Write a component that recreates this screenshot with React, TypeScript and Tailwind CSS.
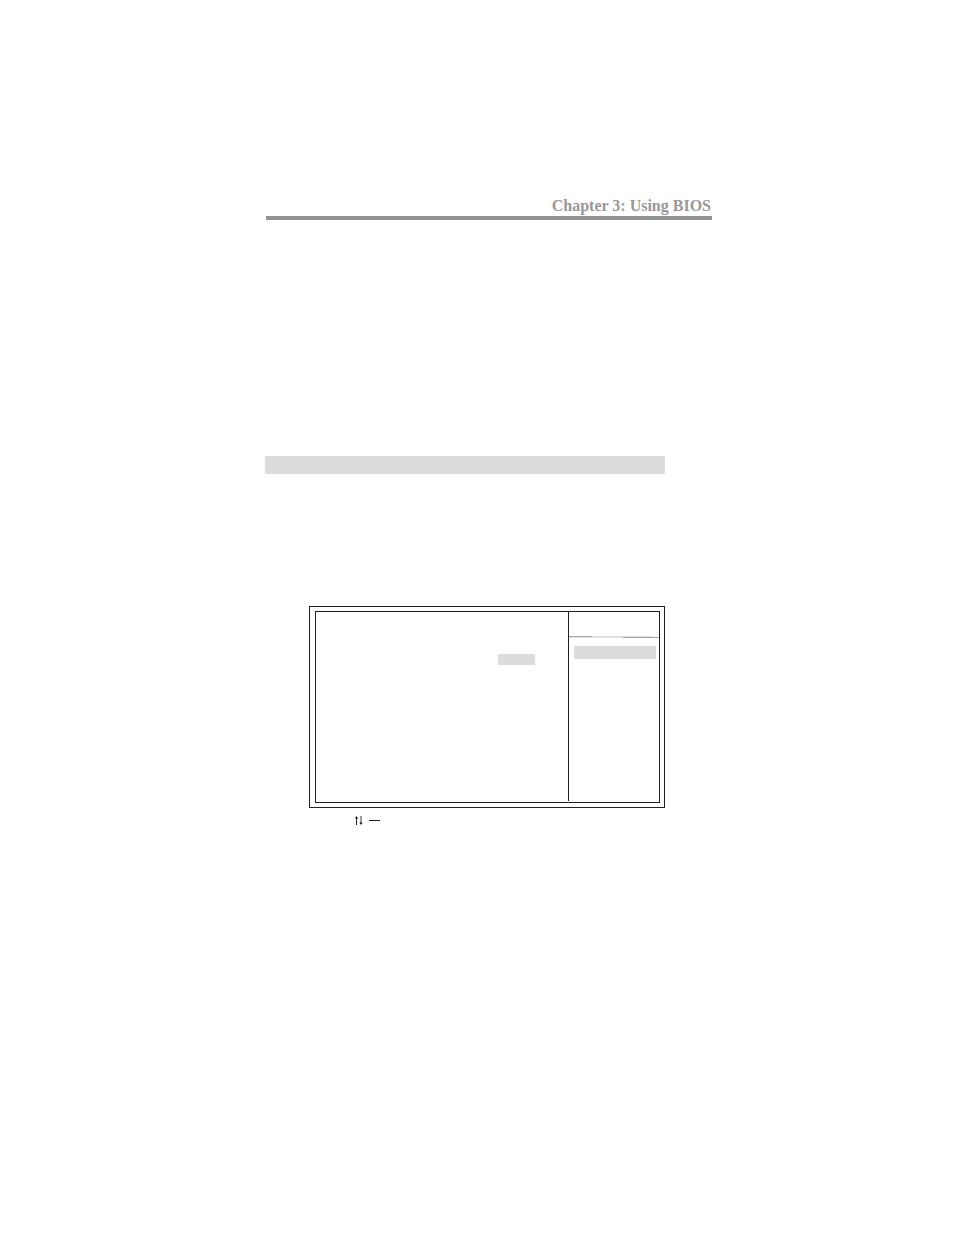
export default function App() {
  return (
    <main className="min-h-screen bg-white pt-[196px] pr-[242px] pl-[265px] text-[#231f20]">
      <header className="ml-px border-b-4 border-[#929195]">
        <h1 className="pr-px text-right font-['Liberation_Serif',serif] text-base leading-5 font-bold text-[#98979b]">
          Chapter 3: Using BIOS
        </h1>
      </header>

      <div className="mr-[47px]">
        <div className="mt-[236px] h-[18px] bg-[#dbdcde]" />

        <section className="mt-[132px] ml-11 border border-[#231f20] py-1 pr-1 pl-[5px]" aria-label="BIOS setup screen">
          <div className="flex h-48 border border-[#231f20]">
            <div className="flex grow justify-end pt-[42px] pr-[33px]">
              <div className="h-[11px] w-[37px] bg-[#dbdcde]" />
            </div>
            <aside className="mb-px w-[91px] border-l border-[#231f20]">
              <svg className="mt-6 block h-[2px] w-full" viewBox="0 0 90 2" preserveAspectRatio="none" shapeRendering="crispEdges" aria-hidden="true">
                <path d="M0 0H84V1H0Z M0 1H54V2H0Z" fill="#e1e1e1" />
                <path d="M0 0H23V1H0Z M54 1H90V2H54Z" fill="#a8a8a8" />
              </svg>
              <div className="mt-2 mr-[3px] ml-[5px] h-[13px] bg-[#dbdcde]" />
            </aside>
          </div>
        </section>

        <div className="mt-2 ml-[89px] flex h-[9px] items-center">
          <svg className="h-[9px] w-[26px]" viewBox="0 0 26 9" fill="none" stroke="#231f20" role="img" aria-label="Up and down arrow keys">
            <path d="M2.5 1V9" />
            <path d="M7 0V8" strokeWidth="0.9" />
            <path d="M2.5 0L4.2 2.4H0.8Z M7 9L8.7 6.6H5.3Z" fill="#231f20" stroke="none" />
            <path d="M15 4.5H26" />
          </svg>
        </div>
      </div>
    </main>
  );
}
